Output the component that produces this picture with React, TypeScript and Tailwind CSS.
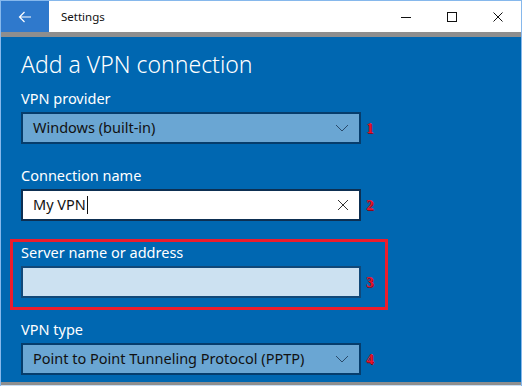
import React from 'react';

const ui = { fontFamily: '"Segoe UI", "Noto Sans", "Open Sans", sans-serif' };
const mark = { fontFamily: '"Liberation Serif", "Times New Roman", serif' };

function Chevron() {
  return (
    <svg width="14" height="8" viewBox="0 0 14 8" className="shrink-0">
      <path d="M1 1 L7 7 L13 1" fill="none" stroke="#2a4a6a" strokeWidth="1" />
    </svg>
  );
}

function Marker({ n }: { n: string }) {
  return (
    <span
      className="ml-[5px] text-[15px] font-bold leading-none text-[#e8132c] [text-shadow:1px_1px_0_#8a0a1a]"
      style={mark}
    >
      {n}
    </span>
  );
}

function Select({ value, n }: { value: string; n: string }) {
  return (
    <div className="flex items-center">
      <div className="flex h-[32px] w-[340px] items-center justify-between border-2 border-[#063d6c] bg-[#6aa6d3] pl-[10px] pr-[10px]">
        <span className="text-[14.5px] text-[#111]">{value}</span>
        <Chevron />
      </div>
      <Marker n={n} />
    </div>
  );
}

function Field({ label, children }: { label: string; children: React.ReactNode }) {
  return (
    <div className="flex flex-col">
      <span className="text-[14.5px] leading-[20px] text-white">{label}</span>
      <div className="mt-[4px]">{children}</div>
    </div>
  );
}

export default function App() {
  return (
    <div
      className="flex h-[386px] w-[522px] flex-col overflow-hidden border-x border-t border-[#86b8ec] bg-[#e9f1fa]"
      style={ui}
    >
      {/* title bar */}
      <div className="flex h-[31px] shrink-0 items-center bg-white">
        <div className="flex h-full w-[48px] items-center justify-center bg-[#2f79cc]">
          <svg width="14" height="12" viewBox="0 0 14 12">
            <path d="M13 6 H1.5 M6.5 1 L1.5 6 L6.5 11" fill="none" stroke="#fff" strokeWidth="1.2" />
          </svg>
        </div>
        <span className="ml-[12px] text-[11.5px] text-[#111]">Settings</span>
        <div className="ml-auto flex h-full items-center">
          <div className="flex w-[46px] justify-center">
            <svg width="10" height="10" viewBox="0 0 10 10">
              <path d="M0 5.5 H10" stroke="#111" strokeWidth="1" />
            </svg>
          </div>
          <div className="flex w-[46px] justify-center">
            <svg width="10" height="10" viewBox="0 0 10 10">
              <rect x="0.5" y="0.5" width="9" height="9" fill="none" stroke="#111" strokeWidth="1" />
            </svg>
          </div>
          <div className="flex w-[46px] justify-center">
            <svg width="10" height="10" viewBox="0 0 10 10">
              <path d="M0.5 0.5 L9.5 9.5 M9.5 0.5 L0.5 9.5" stroke="#111" strokeWidth="1" />
            </svg>
          </div>
        </div>
      </div>
      <div className="h-[5px] shrink-0 bg-[#8e8e8e]" />

      {/* content */}
      <div className="flex flex-1 flex-col overflow-hidden bg-[#0067b1] pl-[20px] pt-[12px]">
        <h1 className="text-[23px] font-light leading-[30px] text-white">Add a VPN connection</h1>

        <div className="mt-[9px] flex flex-col gap-[21px]">
          <Field label="VPN provider">
            <Select value="Windows (built-in)" n="1" />
          </Field>

          <Field label="Connection name">
            <div className="flex items-center">
              <div className="flex h-[32px] w-[340px] items-center justify-between border-2 border-[#0d2f52] bg-white pl-[10px] pr-[10px]">
                <span className="flex items-center text-[14.5px] text-[#111]">
                  My VPN
                  <span className="ml-[1px] inline-block h-[18px] w-px bg-[#111]" />
                </span>
                <svg width="12" height="12" viewBox="0 0 12 12">
                  <path d="M1 1 L11 11 M11 1 L1 11" stroke="#333" strokeWidth="1" />
                </svg>
              </div>
              <Marker n="2" />
            </div>
          </Field>

          <div className="relative">
            <div className="pointer-events-none absolute left-[-11px] top-[-3px] h-[71px] w-[378px] border-[3px] border-[#ec1c2c]" />
            <Field label="Server name or address">
              <div className="flex items-center">
                <div className="h-[32px] w-[340px] border-2 border-[#114878] bg-[#cce1f1]" />
                <Marker n="3" />
              </div>
            </Field>
          </div>

          <Field label="VPN type">
            <Select value="Point to Point Tunneling Protocol (PPTP)" n="4" />
          </Field>
        </div>
      </div>
      <div className="h-[3px] shrink-0 bg-[#8e8e8e]" />
      <div className="h-px shrink-0 bg-[#c9dcf0]" />
    </div>
  );
}
